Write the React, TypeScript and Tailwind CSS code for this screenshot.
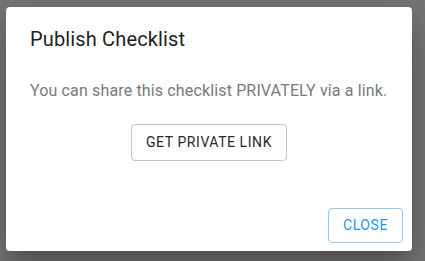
import React from "react";

export default function App() {
  return (
    <div className="w-[425px] h-[261px] bg-[#777777] overflow-hidden" style={{ fontFamily: "Roboto, 'Liberation Sans', sans-serif" }}>
      <div className="ml-[6px] mt-[7px] w-[406px] h-[244px] bg-white rounded-[4px] shadow-[0_11px_15px_-7px_rgba(0,0,0,0.2),0_24px_38px_3px_rgba(0,0,0,0.14),0_9px_46px_8px_rgba(0,0,0,0.12)] flex flex-col">
        <div className="px-[24px] pt-[16px] text-[20px] leading-[32px] text-[#222222] font-normal tracking-[0.0075em]">
          Publish Checklist
        </div>
        <div className="px-[24px] pt-[24px] text-[16px] leading-[24px] text-[#7a7a7a] tracking-[0.009em]">
          You can share this checklist PRIVATELY via a link.
        </div>
        <div className="flex justify-center pt-[21px]">
          <button className="w-[156px] h-[37px] border border-[#c4c4c4] rounded-[4px] text-[14px] font-normal text-[#2a2a2a] tracking-[0.04em] uppercase">
            GET PRIVATE LINK
          </button>
        </div>
        <div className="flex-1" />
        <div className="flex justify-end pr-[9px] pb-[8px]">
          <button className="w-[75px] h-[35px] border border-[#90cbf9] rounded-[4px] text-[14px] font-normal text-[#2196f3] tracking-[0.04em]">
            CLOSE
          </button>
        </div>
      </div>
    </div>
  );
}
